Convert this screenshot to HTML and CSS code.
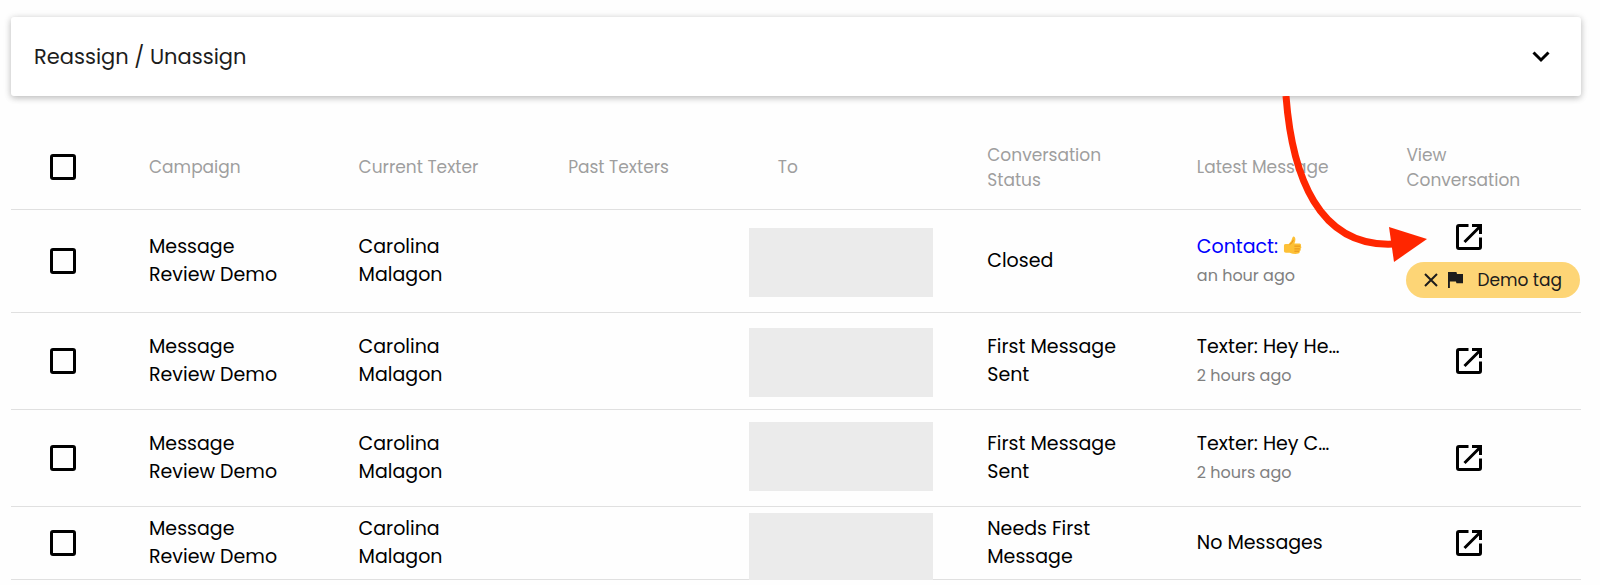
FILE: index.html
```html
<!DOCTYPE html>
<html lang="en">
<head>
<meta charset="utf-8">
<meta name="viewport" content="width=device-width, initial-scale=1">
<title>Message Review</title>
<link rel="stylesheet" href="styles.css">
</head>
<body>
<svg class="sprite" aria-hidden="true">
  <symbol id="open-in-new" viewBox="0 0 26 26">
    <path d="M12.500 1.500H3Q1.500 1.500 1.500 3V23Q1.500 24.500 3 24.500H23Q24.500 24.500 24.500 23V13.500M8.500 18L24 2.500" fill="none" stroke="currentColor" stroke-width="3"/>
    <path d="M16 0H26V10H23V3H16Z" fill="currentColor"/>
  </symbol>
</svg>
<main class="page">
  <button class="accordion" type="button" aria-expanded="false">
    <span>Reassign / Unassign</span>
    <svg class="chevron" viewBox="0 0 18 12" aria-hidden="true"><path d="M1.500 1.500L9 9L16.500 1.500" fill="none" stroke="currentColor" stroke-width="3"/></svg>
  </button>

  <table class="messages">
    <thead>
      <tr>
        <th class="select"><input class="check" type="checkbox" aria-label="Select all"></th>
        <th>Campaign</th>
        <th>Current Texter</th>
        <th>Past Texters</th>
        <th>To</th>
        <th>Conversation Status</th>
        <th>Latest Message</th>
        <th>View Conversation</th>
      </tr>
    </thead>
    <tbody>
      <tr class="row-tagged">
        <td class="select"><input class="check" type="checkbox" aria-label="Select conversation 1"></td>
        <td>Message Review Demo</td>
        <td>Carolina Malagon</td>
        <td></td>
        <td class="to"><span class="redacted"></span></td>
        <td>Closed</td>
        <td>
          <p class="message contact">Contact:
            <svg class="thumb" viewBox="0 0 20 20" role="img" aria-label="thumbs up">
              <path d="M1 10Q1 8.500 3 8.500H6Q9 6 10 1.500Q11-.500 12.600 1.500Q13.700 4 12 8H17.500Q19.500 8.500 18.800 10.500Q20 12 18.500 13.500Q19.200 15 17.600 16Q18 18 16 18.500Q12 19.500 7 17.500H3Q1 17.500 1 16Z" fill="#fdc036"/>
              <path d="M12 10.700H18M12 13.600H17.800M12 16H17M7 9Q10 7.500 11 4" fill="none" stroke="#e58e18" stroke-width="1"/>
            </svg>
          </p>
          <p class="time">an hour ago</p>
        </td>
        <td>
          <div class="view">
            <button class="open" type="button" aria-label="Open conversation"><svg viewBox="0 0 26 26"><use href="#open-in-new"/></svg></button>
            <div class="tag">
              <button class="remove" type="button" aria-label="Remove tag"><svg viewBox="0 0 14 14"><path d="M1 1L13 13M13 1L1 13" stroke="currentColor" stroke-width="2"/></svg></button>
              <svg class="flag" viewBox="0 0 16 17" aria-hidden="true"><path d="M0 0H9L9.600 2H16V12H9L8.500 10H2V17H0Z" fill="currentColor"/></svg>
              <span class="tag-name">Demo tag</span>
            </div>
          </div>
        </td>
      </tr>
      <tr class="row-second">
        <td class="select"><input class="check" type="checkbox" aria-label="Select conversation 2"></td>
        <td>Message Review Demo</td>
        <td>Carolina Malagon</td>
        <td></td>
        <td class="to"><span class="redacted"></span></td>
        <td>First Message Sent</td>
        <td><p class="message">Texter: Hey He…</p><p class="time">2 hours ago</p></td>
        <td><div class="view"><button class="open" type="button" aria-label="Open conversation"><svg viewBox="0 0 26 26"><use href="#open-in-new"/></svg></button></div></td>
      </tr>
      <tr class="row-third">
        <td class="select"><input class="check" type="checkbox" aria-label="Select conversation 3"></td>
        <td>Message Review Demo</td>
        <td>Carolina Malagon</td>
        <td></td>
        <td class="to"><span class="redacted"></span></td>
        <td>First Message Sent</td>
        <td><p class="message">Texter: Hey C…</p><p class="time">2 hours ago</p></td>
        <td><div class="view"><button class="open" type="button" aria-label="Open conversation"><svg viewBox="0 0 26 26"><use href="#open-in-new"/></svg></button></div></td>
      </tr>
      <tr class="row-last">
        <td class="select"><input class="check" type="checkbox" aria-label="Select conversation 4"></td>
        <td>Message Review Demo</td>
        <td>Carolina Malagon</td>
        <td></td>
        <td class="to"><span class="redacted"></span></td>
        <td>Needs First Message</td>
        <td>No Messages</td>
        <td><div class="view"><button class="open" type="button" aria-label="Open conversation"><svg viewBox="0 0 26 26"><use href="#open-in-new"/></svg></button></div></td>
      </tr>
    </tbody>
  </table>

  <svg class="arrow" viewBox="0 0 147 170" aria-hidden="true">
    <path d="M6 0C12 79 38 152 114 148" fill="none" stroke="#ff2600" stroke-width="7"/>
    <path d="M109 131L147 143L114 166Z" fill="#ff2600"/>
  </svg>
</main>
</body>
</html>
```
FILE: styles.css
```css
* {
  box-sizing: border-box;
}

body {
  margin: 0;
  background: #fefefe;
  color: #000;
  font-family: Poppins, Inter, "Noto Sans", sans-serif;
  font-size: 19px;
  line-height: 28px;
}

button {
  padding: 0;
  border: 0;
  background: none;
  color: inherit;
  font: inherit;
  cursor: pointer;
}

p {
  margin: 0;
}

.sprite {
  display: none;
}

.page {
  position: relative;
  padding: 17px 19px 0 11px;
}

.accordion {
  display: flex;
  align-items: center;
  justify-content: space-between;
  width: 100%;
  padding: 24px 31px 24px 23px;
  border-radius: 3px;
  background: #fff;
  box-shadow: 0 2px 6px rgba(0, 0, 0, 0.2), 0 1px 8px rgba(0, 0, 0, 0.1);
  color: #1c1c1c;
  font-size: 21px;
  line-height: 31px;
}

.chevron {
  width: 18px;
  height: 12px;
  color: #000;
}

.messages {
  width: 100%;
  margin-top: 29px;
  border-collapse: separate;
  border-spacing: 0;
  table-layout: fixed;
}

.messages th,
.messages td {
  height: 97px;
  padding: 0 35px;
  border-bottom: 1px solid #e0e0e0;
  text-align: left;
  vertical-align: middle;
}

.messages th {
  height: 85px;
  padding-top: 1px;
  color: #9e9e9e;
  font-size: 17px;
  font-weight: 400;
  line-height: 25px;
}

.messages .select {
  width: 103px;
  padding: 0;
  text-align: center;
}

.messages .row-tagged td {
  height: 103px;
}

.messages .row-last td {
  height: 73px;
}

.check {
  display: block;
  width: 26px;
  height: 26px;
  margin: 0 auto;
  border: 3px solid #000;
  border-radius: 3px;
  appearance: none;
  cursor: pointer;
}

.check:checked {
  background: #000;
}

.to {
  position: relative;
}

.redacted {
  position: absolute;
  top: 15px;
  left: 6px;
  width: 184px;
  height: 69px;
  background: #ebebeb;
}

.row-tagged .redacted {
  top: 18px;
}

.row-third .redacted {
  top: 12px;
}

.row-last .redacted {
  top: 6px;
}

.message {
  white-space: nowrap;
}

.contact {
  color: #0000ff;
}

.thumb {
  width: 19px;
  height: 19px;
  vertical-align: -2px;
}

.time {
  padding-top: 1px;
  color: #808080;
  font-size: 16px;
}

.view {
  display: flex;
  flex-direction: column;
  gap: 12px;
}

.open {
  display: block;
  width: 26px;
  height: 26px;
  margin-left: 50px;
}

.open svg,
.remove svg {
  display: block;
  width: 100%;
  height: 100%;
}

.tag {
  display: flex;
  align-items: center;
  width: max-content;
  padding: 4px 18px;
  border-radius: 18px;
  background: #fdd576;
  color: #1c1c1c;
  font-size: 17px;
}

.remove {
  width: 14px;
  height: 14px;
}

.flag {
  width: 15px;
  height: 16px;
  margin-left: 10px;
}

.tag-name {
  margin-left: 14px;
}

.arrow {
  position: absolute;
  top: 96px;
  right: 173px;
  width: 147px;
  height: 170px;
  pointer-events: none;
}
```
